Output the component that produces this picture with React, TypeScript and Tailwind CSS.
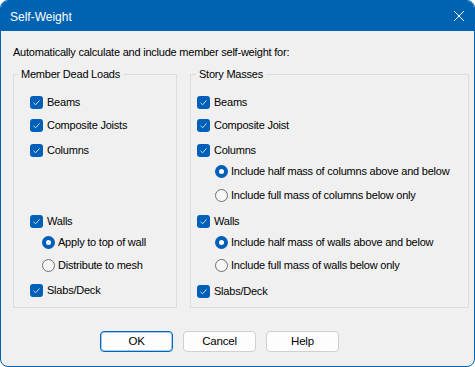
import React from 'react';

const font = { fontFamily: '"Liberation Sans", Arial, sans-serif', letterSpacing: '-0.22px' };

const Check: React.FC<{ label: string }> = ({ label }) => (
  <div className="flex items-center h-[16px] gap-[4px] whitespace-nowrap">
    <span className="w-[13px] h-[13px] rounded-[3px] bg-[#005FB8] flex items-center justify-center">
      <svg width="9" height="9" viewBox="0 0 9 9">
        <path d="M1.5 4.8 L3.6 6.8 L7.5 2.4" fill="none" stroke="#cfe0f2" strokeWidth="1" />
      </svg>
    </span>
    <span>{label}</span>
  </div>
);

const Radio: React.FC<{ label: string; on?: boolean }> = ({ label, on }) => (
  <div className="flex items-center h-[16px] gap-[3px] whitespace-nowrap">
    {on ? (
      <span className="w-[13px] h-[13px] rounded-full bg-[#005FB8] flex items-center justify-center">
        <span className="w-[5px] h-[5px] rounded-full bg-white" />
      </span>
    ) : (
      <span className="w-[13px] h-[13px] rounded-full border border-[#6f6f6f] bg-[#f7f7f7]" />
    )}
    <span>{label}</span>
  </div>
);

const App: React.FC = () => {
  return (
    <div className="w-[475px] h-[367px] bg-white text-[11px] text-black" style={font}>
      <div className="w-full h-full flex flex-col rounded-[8px] overflow-hidden border border-[#0063B1] bg-[#f0f0f0]">
        {/* title bar */}
        <div className="h-[30px] bg-[#0063B1] flex items-center justify-between pl-[9px] pr-[9px] text-white">
          <span className="text-[12px] pt-[1px] tracking-normal">Self-Weight</span>
          <svg width="12" height="12" viewBox="0 0 12 12">
            <path d="M1 1 L11 11 M11 1 L1 11" stroke="white" strokeWidth="1" />
          </svg>
        </div>

        <div className="flex-1 flex flex-col">
          <div className="mt-[13px] pl-[12px] leading-[16px] whitespace-nowrap">
            Automatically calculate and include member self-weight for:
          </div>

          <div className="mt-[6px] ml-[12px] flex gap-[13px]">
            <fieldset className="w-[164px] h-[242px] border border-[#dcdcdc]">
              <legend className="ml-[4px] px-[3px] leading-[16px]">Member Dead Loads</legend>
              <div className="flex flex-col pl-[16px]">
                <div className="mt-[12px]"><Check label="Beams" /></div>
                <div className="mt-[7px]"><Check label="Composite Joists" /></div>
                <div className="mt-[9px]"><Check label="Columns" /></div>
                <div className="mt-[55px]"><Check label="Walls" /></div>
                <div className="mt-[5px] ml-[12px]"><Radio label="Apply to top of wall" on /></div>
                <div className="mt-[7px] ml-[12px]"><Radio label="Distribute to mesh" /></div>
                <div className="mt-[9px]"><Check label="Slabs/Deck" /></div>
              </div>
            </fieldset>

            <fieldset className="w-[279px] h-[242px] border border-[#dcdcdc]">
              <legend className="ml-[5px] px-[3px] leading-[16px]">Story Masses</legend>
              <div className="flex flex-col pl-[6px]">
                <div className="mt-[12px]"><Check label="Beams" /></div>
                <div className="mt-[7px]"><Check label="Composite Joist" /></div>
                <div className="mt-[9px]"><Check label="Columns" /></div>
                <div className="mt-[5px] ml-[18px]"><Radio label="Include half mass of columns above and below" on /></div>
                <div className="mt-[8px] ml-[18px]"><Radio label="Include full mass of columns below only" /></div>
                <div className="mt-[10px]"><Check label="Walls" /></div>
                <div className="mt-[5px] ml-[18px]"><Radio label="Include half mass of walls above and below" on /></div>
                <div className="mt-[7px] ml-[18px]"><Radio label="Include full mass of walls below only" /></div>
                <div className="mt-[10px]"><Check label="Slabs/Deck" /></div>
              </div>
            </fieldset>
          </div>

          <div className="mt-[23px] ml-[99px] flex gap-[10px] text-[11.5px]">
            <button className="w-[73px] h-[21px] rounded-[4px] bg-[#fdfdfd] border border-[#0067C0] shadow-[inset_0_0_0_1px_rgba(0,103,192,0.35)]">OK</button>
            <button className="w-[73px] h-[21px] rounded-[4px] bg-[#fdfdfd] border border-[#d0d0d0]">Cancel</button>
            <button className="w-[73px] h-[21px] rounded-[4px] bg-[#fdfdfd] border border-[#d0d0d0]">Help</button>
          </div>
        </div>
      </div>
    </div>
  );
};

export default App;
